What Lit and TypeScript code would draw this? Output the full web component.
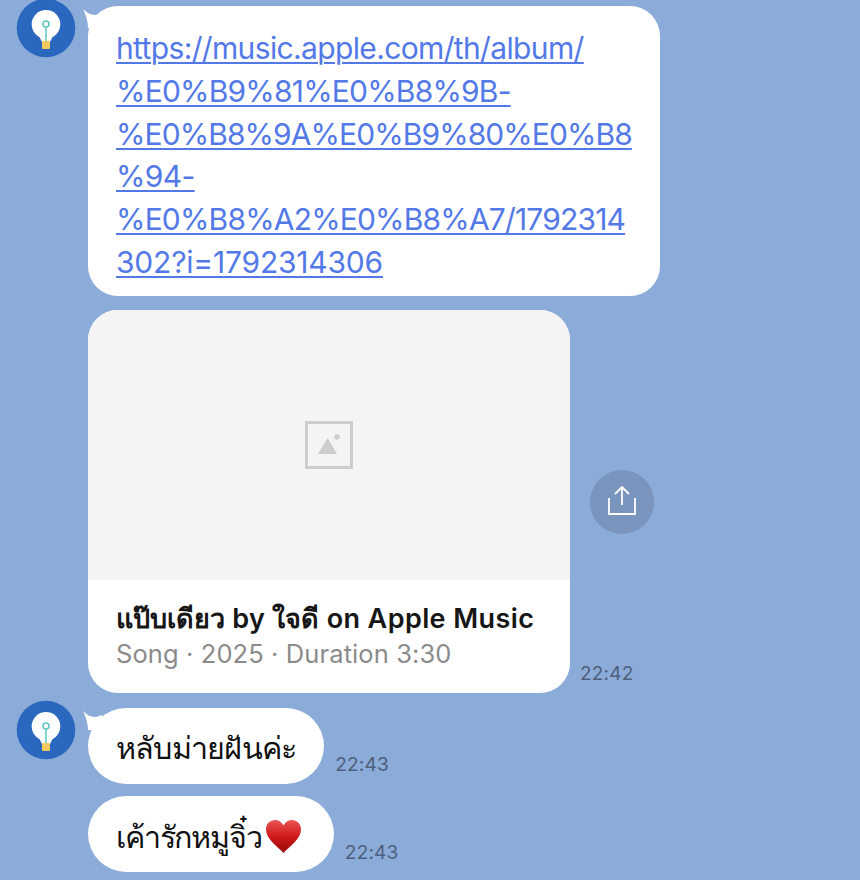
import { LitElement, html, css, svg } from "lit";
import { customElement } from "lit/decorators.js";

const avatar = html`<svg class="avatar" viewBox="0 0 60 60" aria-hidden="true">
  <circle cx="30" cy="30" r="29.300" fill="#2a68bf"></circle>
  <circle cx="30" cy="26.300" r="14.300" fill="#fff"></circle>
  <path d="M22 36H38L34 44H26Z" fill="#fff"></path>
  <rect x="26" y="43" width="8" height="8" rx="1" fill="#f4c95d"></rect>
  <path d="M30 29V43" stroke="#5cc4bd" stroke-width="1.500"></path>
  <circle cx="30" cy="26" r="3" fill="#fff" stroke="#5cc4bd" stroke-width="1.500"></circle>
</svg>`;

const tail = html`<svg class="tail" viewBox="0 0 22 20" aria-hidden="true">
  <path d="M1 1C4 4 8 7 14 7L20 5V20H6C6 14 4 7 1 1Z" fill="#fff"></path>
</svg>`;

const heart = svg`<defs><linearGradient id="h" x1="0" y1="0" x2="0" y2="1">
  <stop offset="0" stop-color="#ea5554"></stop><stop offset=".5" stop-color="#cf1a1a"></stop><stop offset="1" stop-color="#960808"></stop></linearGradient></defs>
  <path d="M18.500 34C12 27 1 20 1 10.500C1 4.500 5.500 1 10 1C13.700 1 16.800 3 18.500 6.500C20.200 3 23.300 1 27 1C31.500 1 36 4.500 36 10.500C36 20 25 27 18.500 34Z" fill="url(#h)"></path>`;

@customElement("app-root")
export class AppRoot extends LitElement {
  static styles = css`
    :host {
      display: block;
      width: 860px;
      height: 880px;
      overflow: hidden;
      background: #8babd8;
      font-family: "Inter", "Liberation Sans", "Noto Sans CJK SC", sans-serif;
      color: #111;
    }
    .chat {
      display: flex;
      flex-direction: column;
      padding: 6px 0 0 16px;
    }
    .row {
      display: flex;
      align-items: flex-end;
    }
    .gutter {
      width: 72px;
      flex: none;
      align-self: stretch;
      position: relative;
    }
    .avatar {
      position: absolute;
      left: 0;
      top: -8px;
      width: 60px;
      height: 60px;
    }
    .tail {
      position: absolute;
      left: 66px;
      top: 2px;
      width: 22px;
      height: 20px;
    }
    .bubble {
      background: #fff;
      border-radius: 38px;
      padding: 0 28px;
      box-sizing: border-box;
    }
    .link {
      width: 572px;
      height: 290px;
      border-radius: 30px;
      padding-top: 21px;
      font-size: 30px;
      letter-spacing: -0.64px;
      line-height: 42.800px;
      color: #5379e8;
      text-decoration: underline;
      text-underline-offset: 3px;
      text-decoration-thickness: 2px;
      white-space: nowrap;
    }
    .link span {
      display: block;
    }
    .link .l2 {
      letter-spacing: -0.8px;
    }
    .link .l3 {
      letter-spacing: -0.92px;
    }
    .link .l5 {
      letter-spacing: -0.82px;
    }
    .link .l6 {
      letter-spacing: -0.2px;
    }
    .second {
      margin-top: 14px;
    }
    .card {
      width: 482px;
      height: 383px;
      background: #fff;
      border-radius: 30px;
      overflow: hidden;
      flex: none;
    }
    .thumb {
      height: 270px;
      background: #f4f4f4;
      display: flex;
      align-items: center;
      justify-content: center;
    }
    .thumb svg {
      width: 48px;
      height: 48px;
    }
    .info {
      padding: 20px 28px 0;
      white-space: nowrap;
    }
    .title {
      font-size: 27px;
      line-height: 38px;
      font-weight: 600;
      letter-spacing: 0.4px;
      color: #161616;
    }
    .title .th {
      letter-spacing: 0;
    }
    .sub {
      font-size: 25.500px;
      line-height: 32px;
      letter-spacing: 0.1px;
      color: #8b8b8b;
    }
    .side {
      width: 90px;
      align-self: stretch;
      display: flex;
      flex-direction: column;
      margin-left: 10px;
    }
    .share {
      width: 64px;
      height: 64px;
      margin-top: 160px;
      margin-left: 10px;
      border-radius: 50%;
      background: #7a95bd;
      display: flex;
      align-items: center;
      justify-content: center;
    }
    .share svg {
      width: 32px;
      height: 32px;
    }
    .time {
      font-size: 19px;
      line-height: 24px;
      letter-spacing: 0.2px;
      color: #4d5f7c;
      white-space: nowrap;
    }
    .side .time {
      margin-top: auto;
      margin-bottom: 7px;
    }
    .msg {
      height: 76px;
      display: flex;
      align-items: center;
      font-size: 30.500px;
      letter-spacing: -0.78px;
      line-height: 76px;
      white-space: nowrap;
      color: #111;
    }
    .msg span {
      position: relative;
      top: 2px;
    }
    .msg .tight {
      letter-spacing: -1.13px;
      top: 3px;
    }
    .row > .time {
      margin: 0 0 7px 11px;
    }
    .third {
      margin-top: 15px;
    }
    .fourth {
      margin-top: 12px;
    }
    .heart {
      width: 37px;
      height: 35px;
      margin: 4px 4px 0 3px;
      flex: none;
    }
  `;

  render() {
    return html`<div class="chat">
      <div class="row">
        <div class="gutter">${avatar}${tail}</div>
        <div class="bubble link">
          <span>https://music.apple.com/th/album/</span>
          <span class="l2">%E0%B9%81%E0%B8%9B-</span>
          <span class="l3">%E0%B8%9A%E0%B9%80%E0%B8</span>
          <span>%94-</span>
          <span class="l5">%E0%B8%A2%E0%B8%A7/1792314</span>
          <span class="l6">302?i=1792314306</span>
        </div>
      </div>
      <div class="row second">
        <div class="gutter"></div>
        <div class="card">
          <div class="thumb">
            <svg viewBox="0 0 48 48" aria-hidden="true">
              <rect x="1.500" y="1.500" width="45" height="45" fill="none" stroke="#cdcdcd" stroke-width="3"></rect>
              <path d="M13 33L22.500 17L32 33Z" fill="#cdcdcd"></path>
              <circle cx="32" cy="16" r="2.800" fill="#cdcdcd"></circle>
            </svg>
          </div>
          <div class="info">
            <div class="title"><span class="th">แป๊บเดียว</span> by <span class="th">ใจดี</span> on Apple Music</div>
            <div class="sub">Song · 2025 · Duration 3:30</div>
          </div>
        </div>
        <div class="side">
          <div class="share">
            <svg viewBox="0 0 32 32" fill="none" stroke="#fff" stroke-width="1.800" aria-hidden="true">
              <path d="M3 12V28H29V12"></path>
              <path d="M16 19V1M9 8L16 1L23 8"></path>
            </svg>
          </div>
          <div class="time">22:42</div>
        </div>
      </div>
      <div class="row third">
        <div class="gutter">${avatar}${tail}</div>
        <div class="bubble msg"><span>หลับม่ายฝันค่ะ</span></div>
        <div class="time">22:43</div>
      </div>
      <div class="row fourth">
        <div class="gutter"></div>
        <div class="bubble msg"><span class="tight">เค้ารักหมูจิ๋ว</span><svg class="heart" viewBox="0 0 37 35" aria-hidden="true">${heart}</svg></div>
        <div class="time">22:43</div>
      </div>
    </div>`;
  }
}
